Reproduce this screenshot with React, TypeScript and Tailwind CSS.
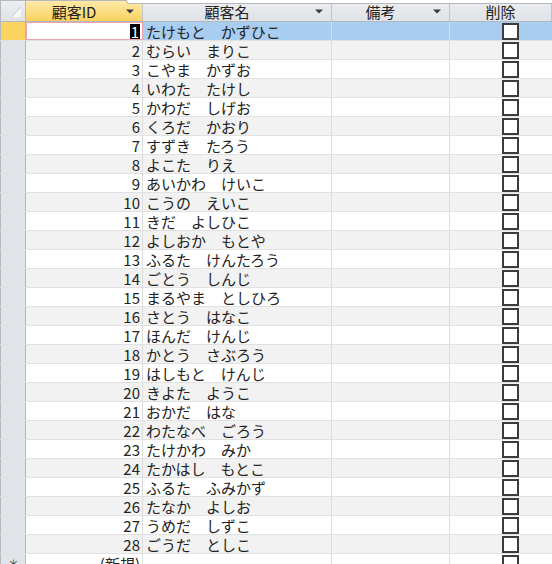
import React from 'react';

const customers: string[] = [
  'たけもと　かずひこ',
  'むらい　まりこ',
  'こやま　かずお',
  'いわた　たけし',
  'かわだ　しげお',
  'くろだ　かおり',
  'すずき　たろう',
  'よこた　りえ',
  'あいかわ　けいこ',
  'こうの　えいこ',
  'きだ　よしひこ',
  'よしおか　もとや',
  'ふるた　けんたろう',
  'ごとう　しんじ',
  'まるやま　としひろ',
  'さとう　はなこ',
  'ほんだ　けんじ',
  'かとう　さぶろう',
  'はしもと　けんじ',
  'きよた　ようこ',
  'おかだ　はな',
  'わたなべ　ごろう',
  'たけかわ　みか',
  'たかはし　もとこ',
  'ふるた　ふみかず',
  'たなか　よしお',
  'うめだ　しずこ',
  'ごうだ　としこ',
];

const font = { fontFamily: '"MS UI Gothic", "Noto Sans CJK JP", sans-serif' };

function DropArrow() {
  return (
    <svg width="8" height="5" viewBox="0 0 8 5" className="shrink-0">
      <path d="M0 0.5 H8 L4 4.5 Z" fill="#3a3a3a" />
    </svg>
  );
}

function HeaderCell({ label, width, active, arrow = true }: { label: string; width: string; active?: boolean; arrow?: boolean }) {
  return (
    <div
      className={`${width} h-full flex items-center border-r border-[#c2c6cc] ${
        active ? 'bg-gradient-to-b from-[#fee9a6] to-[#fbd25e]' : 'bg-gradient-to-b from-[#eceef1] to-[#dfe2e6]'
      }`}
    >
      <span className="flex-1 text-center text-[15px] text-[#222] leading-none">{label}</span>
      {arrow && (
        <span className="w-[20px] flex justify-center pr-[4px]">
          <DropArrow />
        </span>
      )}
    </div>
  );
}

function CheckBox() {
  return <div className="w-[17px] h-[17px] border-2 border-[#3c3c3c] bg-white" />;
}

export default function App() {
  return (
    <div className="relative w-[552px] h-[564px] overflow-hidden bg-white select-none" style={font}>
      <div className="absolute top-0 left-[126px] right-0 h-[4px] bg-white border-b border-l border-[#b4b8be] rounded-bl-[8px] z-10" />

      {/* header */}
      <div className="flex h-[22px] border-t border-b border-[#b4b8be]">
        <div className="w-[26px] h-full bg-gradient-to-b from-[#eceef1] to-[#dfe2e6] border-l border-r border-[#b4b8be] relative">
          <svg width="12" height="12" viewBox="0 0 12 12" className="absolute right-[3px] bottom-[3px]">
            <path d="M11 1 L11 11 L1 11 Z" fill="#f5f6f8" />
            <path d="M11 1 L1 11" stroke="#c3c7cd" strokeWidth="1" />
          </svg>
        </div>
        <HeaderCell label="顧客ID" width="w-[117px]" active />
        <HeaderCell label="顧客名" width="w-[189px]" />
        <HeaderCell label="備考" width="w-[118px]" />
        <HeaderCell label="削除" width="flex-1" arrow={false} />
      </div>

      {/* rows */}
      {customers.map((name, i) => {
        const id = i + 1;
        const current = id === 1;
        const rowBg = current ? 'bg-[#a8cdf1]' : id % 2 === 0 ? 'bg-[#f2f2f2]' : 'bg-white';
        return (
          <div key={id} className={`flex h-[19px] border-b border-[#e1e1e1] ${rowBg}`}>
            <div
              className={`w-[26px] h-full border-l border-r border-[#b4b8be] ${
                current ? 'bg-[#fbd462]' : 'bg-[#e0e3e8]'
              }`}
            />
            <div
              className={`w-[117px] h-full flex items-center justify-end pr-[2px] border-r border-[#dcdcdc] text-[15px] leading-none text-[#222] ${
                current ? 'bg-white outline outline-1 -outline-offset-1 outline-[#eda4ad]' : ''
              }`}
            >
              {current ? <span className="bg-black text-white px-[1px] leading-[15px]">1</span> : id}
            </div>
            <div className="w-[189px] h-full flex items-center pl-[3px] border-r border-[#dcdcdc] text-[15px] leading-none text-[#222] whitespace-nowrap overflow-hidden">
              {name}
            </div>
            <div className="w-[118px] h-full border-r border-[#dcdcdc]" />
            <div className="flex-1 h-full flex items-center pl-[52px]">
              <CheckBox />
            </div>
          </div>
        );
      })}

      {/* new record row */}
      <div className="flex h-[19px] bg-white">
        <div className="w-[26px] h-full border-l border-r border-[#b4b8be] bg-[#e0e3e8] flex items-center justify-center text-[13px] text-[#333] leading-none">
          ✳
        </div>
        <div className="w-[117px] h-full flex items-center justify-end pr-[2px] border-r border-[#dcdcdc] text-[15px] leading-none text-[#222]">
          (新規)
        </div>
        <div className="w-[189px] h-full border-r border-[#dcdcdc]" />
        <div className="w-[118px] h-full border-r border-[#dcdcdc]" />
        <div className="flex-1 h-full flex items-center pl-[52px]">
          <CheckBox />
        </div>
      </div>
    </div>
  );
}
